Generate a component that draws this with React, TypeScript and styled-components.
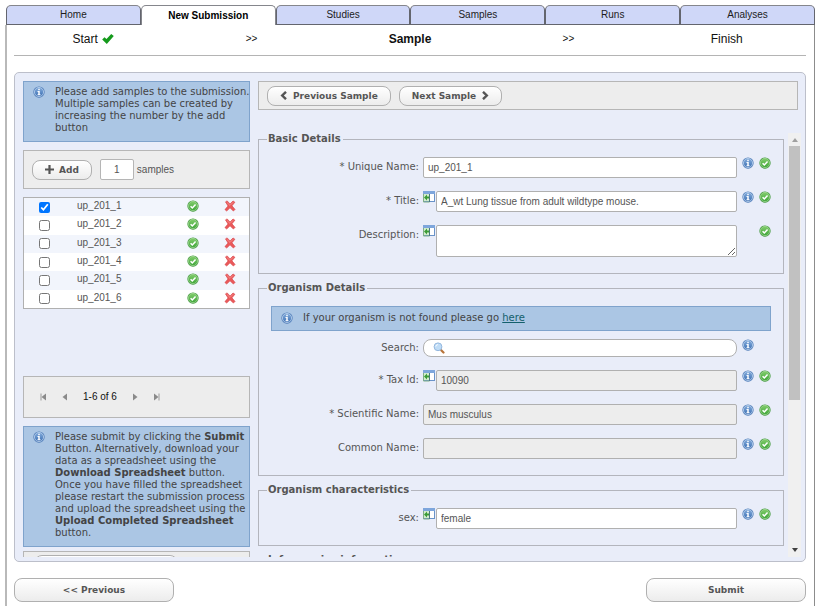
import React, { useId, useState } from "react";
import styled, { createGlobalStyle, css } from "styled-components";

const sans = '"Liberation Sans", Arial, sans-serif';
const wide = '"DejaVu Sans", Verdana, sans-serif';

const GlobalStyle = createGlobalStyle`
  *, *::before, *::after { box-sizing: border-box; }
  body { margin: 0; background: #fff; color: #555; font: 10px/12px ${sans}; }
  button, input, textarea { font: inherit; color: inherit; margin: 0; }
`;

/* ---------- icons ---------- */

const Svg = styled.svg`
  display: block;
  flex: none;
`;

function InfoIcon() {
  const id = useId();
  return (
    <Svg width="12" height="12" viewBox="0 0 16 16" aria-hidden="true">
      <defs>
        <linearGradient id={id} x1="0" y1="0" x2="0" y2="1">
          <stop offset="0" stopColor="#86aedd" />
          <stop offset="1" stopColor="#3b6eb2" />
        </linearGradient>
      </defs>
      <circle cx="8" cy="8" r="7.5" fill="#4d7bb8" />
      <circle cx="8" cy="8" r="6.1" fill={`url(#${id})`} stroke="#c3d8f0" strokeWidth="1" />
      <path d="M7 3.6h2v2H7zM6 6.7h3v4.4h1v1.3H6v-1.3h1V8H6z" fill="#fff" />
    </Svg>
  );
}

function OkIcon() {
  const id = useId();
  return (
    <Svg width="12" height="12" viewBox="0 0 16 16" aria-hidden="true">
      <defs>
        <linearGradient id={id} x1="0" y1="0" x2="0" y2="1">
          <stop offset="0" stopColor="#82cd6c" />
          <stop offset="1" stopColor="#3fa63a" />
        </linearGradient>
      </defs>
      <circle cx="8" cy="8" r="7.5" fill="#3f973b" />
      <circle cx="8" cy="8" r="6.2" fill={`url(#${id})`} stroke="#b2e0a4" strokeWidth="0.9" />
      <path d="M4.8 8.2l2.3 2.4 4.3-4.6" fill="none" stroke="#fff" strokeWidth="2" />
    </Svg>
  );
}

const CrossIcon = () => (
  <Svg width="12" height="12" viewBox="0 0 16 16" aria-hidden="true">
    <path d="M2 2.500 4.200 1.200 8 5.300 12 1.300 14.500 3 10.600 7.800 14.700 12.500 12.500 14.700 8 10.400 3.600 14.600 1.300 12.800 5.400 8z" fill="#ea5a5a" stroke="#d9444a" strokeWidth="0.900" />
    <path d="M3.600 3 8 7.200 12.200 3" fill="none" stroke="#f59a98" strokeWidth="1" />
  </Svg>
);

const SheetIcon = () => (
  <Svg width="13" height="12" viewBox="0 0 13 12" aria-hidden="true">
    <rect x="0.500" y="0.500" width="11" height="10" fill="#fff" stroke="#6a93c8" />
    <rect x="0" y="0" width="12" height="3" fill="#7ea6dc" />
    <rect x="1" y="3" width="5" height="7" fill="#d3ecce" />
    <path d="M0.500 3v8h6" fill="none" stroke="#7fae86" />
    <path d="M6.500 3v8" stroke="#4a7a78" />
    <path d="M1 6.500 4 3.500v2h2v2H4v2z" fill="#3a9c35" />
  </Svg>
);

const SearchIcon = () => (
  <Svg width="12" height="12" viewBox="0 0 12 12" aria-hidden="true">
    <path d="M7.500 7.500 10.500 10.500" stroke="#b8743a" strokeWidth="2.200" strokeLinecap="round" />
    <circle cx="5" cy="4.800" r="3.900" fill="#bfdcf6" stroke="#93b7de" />
    <path d="M2.800 4.500a2.200 2.200 0 0 1 2-1.900" fill="none" stroke="#fff" />
  </Svg>
);

const TickIcon = () => (
  <Svg width="12" height="10" viewBox="0 0 12 10" aria-hidden="true">
    <path d="M0.200 5.400 2.500 3.200 4.500 5 9.200 0.100 11.800 2.100 4.800 9.900z" fill="#159a1c" />
  </Svg>
);

const PlusIcon = () => (
  <Svg width="9" height="9" viewBox="0 0 9 9" aria-hidden="true">
    <path d="M4.500 0v9M0 4.500h9" stroke="#555" strokeWidth="2.200" />
  </Svg>
);

const Chevron = ({ right }: { right?: boolean }) => (
  <Svg width="8" height="9" viewBox="0 0 8 9" aria-hidden="true">
    <path d={right ? "M2 0.800 5.800 4.500 2 8.200" : "M6 0.800 2.200 4.500 6 8.200"} fill="none" stroke="#555" strokeWidth="2.400" />
  </Svg>
);

const PageArrow = ({ right, end }: { right?: boolean; end?: boolean }) => (
  <Svg width="7" height="8" viewBox="0 0 7 8" aria-hidden="true">
    <path d={right ? "M1 0.500 5.500 4 1 7.500z" : "M6 0.500 1.500 4 6 7.500z"} fill="#8a8a8a" />
    {end && <path d={right ? "M6 0.500v7" : "M1 0.500v7"} stroke="#9a9a9a" />}
  </Svg>
);

const ScrollArrow = ({ down }: { down?: boolean }) => (
  <Svg width="6" height="4" viewBox="0 0 6 4" aria-hidden="true">
    <path d={down ? "M0 0h6L3 4z" : "M0 4h6L3 0z"} fill={down ? "#404040" : "#a0a0a0"} />
  </Svg>
);

/* ---------- page frame ---------- */

const Page = styled.div`
  display: flex;
  flex-direction: column;
  height: 100vh;
  min-height: 600px;
  padding: 5px 5px 0;
`;

const Tabs = styled.nav`
  display: flex;
  padding-left: 1px;
`;

const Tab = styled.button<{ $active?: boolean }>`
  flex: 1;
  height: 20px;
  padding: 0;
  border: 1px solid #63656e;
  border-top-color: #85868c;
  border-radius: 5px 5px 0 0;
  background: #cfd7f8;
  color: #1c1c1c;
  ${(p) =>
    p.$active &&
    css`
      border-color: #85868c;
      border-bottom: 0;
      background: #fff;
      color: #000;
      font-weight: bold;
    `}
`;

const Frame = styled.main`
  flex: 1;
  min-height: 0;
  display: flex;
  flex-direction: column;
  padding: 0 8px 4px 7px;
  border-left: 2px solid #b9b9b9;
  border-right: 1px solid #8c8c8c;
`;

const Steps = styled.ol`
  display: grid;
  grid-template-columns: repeat(5, 1fr);
  margin: 0 0 16px;
  padding: 0 0 2px;
  border-bottom: 1px solid #b4b4b4;
  list-style: none;
  color: #111;
`;

const Step = styled.li<{ $kind?: "current" | "separator" }>`
  display: flex;
  align-items: center;
  justify-content: center;
  gap: 4px;
  height: 28px;
  font-size: ${(p) => (p.$kind === "separator" ? "10px" : "12px")};
  font-weight: ${(p) => (p.$kind === "current" ? "bold" : "normal")};
`;

const Panel = styled.section`
  flex: 1;
  min-height: 0;
  display: flex;
  gap: 8px;
  padding: 8px 4px 4px 8px;
  border: 1px solid #bcbfca;
  border-radius: 5px;
  background: #e9edf9;
`;

const Footer = styled.footer`
  display: flex;
  justify-content: space-between;
  margin-top: 16px;
`;

const Button = styled.button<{ $wide?: boolean }>`
  display: inline-flex;
  align-items: center;
  justify-content: center;
  gap: 5px;
  width: ${(p) => (p.$wide ? "160px" : "auto")};
  height: ${(p) => (p.$wide ? "24px" : "20px")};
  padding: 0 12px;
  border: 1px solid #b0b0b0;
  border-radius: 8px;
  background: linear-gradient(#fff, #ececec);
  color: #555;
  font: bold 9px/12px ${wide};
  white-space: nowrap;
`;

/* ---------- left column ---------- */

const Side = styled.aside`
  flex: none;
  width: 227px;
  overflow: hidden;
  display: flex;
  flex-direction: column;
  gap: 8px;
  & > * { flex: none; }
`;

const Notice = styled.div<{ $inline?: boolean }>`
  display: flex;
  gap: 10px;
  padding: ${(p) => (p.$inline ? "5px 9px 6px" : "4px 0 7px 9px")};
  margin-bottom: ${(p) => (p.$inline ? "8px" : "0")};
  border: 1px solid #7fa3cc;
  background: #abc6e4;
  color: #444;
  font: 10px/12px ${wide};
  white-space: nowrap;
  p { margin: 0; }
  a { color: #14606c; }
`;

const Bar = styled.div<{ $size: "tool" | "add" | "pager" }>`
  display: flex;
  align-items: center;
  gap: 8px;
  height: ${(p) => ({ tool: 29, add: 39, pager: 42 })[p.$size]}px;
  margin-right: ${(p) => (p.$size === "tool" ? "3px" : "0")};
  padding: 0 8px;
  border: 1px solid #b6b6b6;
  background: #ededed;
`;

const CountLabel = styled.label`
  display: flex;
  align-items: center;
  gap: 3px;
`;

const CountInput = styled.input`
  width: 34px;
  height: 21px;
  padding: 0;
  border: 1px solid #b5b5b5;
  border-radius: 2px;
  background: #fff;
  text-align: center;
`;

const ListArea = styled.div`
  min-height: 171px;
`;

const SampleTable = styled.table`
  width: 100%;
  height: 112px;
  border: 1px solid #b0b0b0;
  border-spacing: 0;
  background: #fff;
  table-layout: fixed;
  tr:nth-child(odd) { background: #f2f5fc; }
  td { padding: 0 0 2px; }
  td:nth-child(1) { width: 53px; padding: 0 0 0 15px; }
  td:nth-child(3) { width: 37px; }
  td:nth-child(4) { width: 25px; }
`;

const Check = styled.input`
  display: block;
  width: 11px;
  height: 11px;
`;

const IconButton = styled.button`
  display: block;
  padding: 0;
  border: 0;
  background: none;
`;

const Pager = styled.nav`
  display: flex;
  align-items: center;
  gap: 14px;
  padding-left: 8px;
`;

const PageCount = styled.span`
  padding: 0 1px;
  color: #111;
`;

const SheetBar = styled.div`
  height: 40px;
  margin-top: -4px;
  padding: 3px 10px;
  border: 1px solid #b6b6b6;
  background: #ededed;
`;

/* ---------- form ---------- */

const Content = styled.div`
  flex: 1;
  min-width: 0;
  display: flex;
  flex-direction: column;
  gap: 23px;
`;

const Scroller = styled.div`
  flex: 1;
  min-height: 0;
  display: flex;
  gap: 4px;
`;

const Form = styled.form`
  flex: 1;
  min-width: 0;
  overflow: hidden;
`;

const ScrollTrack = styled.div`
  flex: none;
  width: 13px;
  display: flex;
  flex-direction: column;
  align-items: center;
  padding: 5px 0;
  background: #f0f0f0;
`;

const Thumb = styled.div`
  width: 11px;
  height: 254px;
  margin: 4px 0 auto;
  background: #c1c1c1;
`;

const Group = styled.fieldset`
  min-width: 0;
  margin: 0 0 8px;
  padding: 12px 12px 16px;
  border: 1px solid #b3b5bd;
`;

const Legend = styled.legend`
  margin-left: -4px;
  padding: 0 2px 0 1px;
  color: #555;
  font: bold 10px/12px ${wide};
`;

const FieldRow = styled.div`
  display: flex;
  align-items: flex-start;
  & + & { margin-top: 13px; }
`;

const FieldLabel = styled.label<{ $short?: boolean }>`
  flex: none;
  width: 152px;
  padding-right: 4px;
  text-align: right;
  font-family: ${wide};
  line-height: ${(p) => (p.$short ? "18px" : "20px")};
`;

const fieldBox = css`
  flex: 1;
  min-width: 0;
  border: 1px solid #b0b0b0;
  border-radius: 2px;
  background: #fff;
`;

const TextInput = styled.input`
  ${fieldBox}
  height: 21px;
  padding: 0 4px;
  &:read-only { background: #ededed; }
`;

const TextArea = styled.textarea`
  ${fieldBox}
  height: 32px;
  padding: 2px 4px;
`;

const SearchBox = styled.div`
  ${fieldBox}
  display: flex;
  align-items: center;
  height: 18px;
  padding: 0 9px;
  border-radius: 8px;
  input { flex: 1; min-width: 0; border: 0; padding: 0 4px; background: none; outline: 0; }
`;

const FieldIcons = styled.span`
  display: flex;
  flex: none;
  width: 34px;
  gap: 5px;
  padding-left: 5px;
`;

const Spacer = styled.span`
  width: 12px;
`;

type FieldProps = {
  label: string;
  value?: string;
  kind?: "text" | "area" | "search";
  sheet?: boolean;
  readOnly?: boolean;
  info?: boolean;
  ok?: boolean;
};

function Field({ label, value = "", kind = "text", sheet, readOnly, info = true, ok = true }: FieldProps) {
  const id = useId();
  return (
    <FieldRow>
      <FieldLabel htmlFor={id} $short={kind === "search"}>{label}</FieldLabel>
      {sheet && <SheetIcon />}
      {kind === "text" && <TextInput id={id} defaultValue={value} readOnly={readOnly} />}
      {kind === "area" && <TextArea id={id} defaultValue={value} />}
      {kind === "search" && (
        <SearchBox>
          <SearchIcon />
          <input id={id} type="text" />
        </SearchBox>
      )}
      <FieldIcons>
        {info ? <InfoIcon /> : <Spacer />}
        {ok && <OkIcon />}
      </FieldIcons>
    </FieldRow>
  );
}

const tabs = ["Home", "New Submission", "Studies", "Samples", "Runs", "Analyses"];
const samples = [1, 2, 3, 4, 5, 6].map((n) => `up_201_${n}`);

export default function App() {
  const [tab, setTab] = useState("New Submission");
  return (
    <>
      <GlobalStyle />
      <Page>
        <Tabs>
          {tabs.map((t) => (
            <Tab key={t} $active={t === tab} onClick={() => setTab(t)}>{t}</Tab>
          ))}
        </Tabs>
        <Frame>
          <Steps>
            <Step>Start <TickIcon /></Step>
            <Step $kind="separator">&gt;&gt;</Step>
            <Step $kind="current">Sample</Step>
            <Step $kind="separator">&gt;&gt;</Step>
            <Step>Finish</Step>
          </Steps>

          <Panel>
            <Side>
              <Notice>
                <InfoIcon />
                <p>
                  Please add samples to the submission.<br />
                  Multiple samples can be created by<br />
                  increasing the number by the add<br />
                  button
                </p>
              </Notice>
              <Bar $size="add">
                <Button type="button"><PlusIcon /> Add</Button>
                <CountLabel>
                  <CountInput defaultValue="1" />
                  samples
                </CountLabel>
              </Bar>
              <ListArea>
                <SampleTable>
                  <tbody>
                    {samples.map((name, i) => (
                      <tr key={name}>
                        <td><Check type="checkbox" defaultChecked={i === 0} aria-label={name} /></td>
                        <td>{name}</td>
                        <td><OkIcon /></td>
                        <td><IconButton type="button" aria-label={`Delete ${name}`}><CrossIcon /></IconButton></td>
                      </tr>
                    ))}
                  </tbody>
                </SampleTable>
              </ListArea>
              <Bar $size="pager">
                <Pager>
                  <IconButton type="button" aria-label="First page"><PageArrow end /></IconButton>
                  <IconButton type="button" aria-label="Back one page"><PageArrow /></IconButton>
                  <PageCount>1-6 of 6</PageCount>
                  <IconButton type="button" aria-label="Forward one page"><PageArrow right /></IconButton>
                  <IconButton type="button" aria-label="Last page"><PageArrow right end /></IconButton>
                </Pager>
              </Bar>
              <Notice>
                <InfoIcon />
                <p>
                  Please submit by clicking the <b>Submit</b><br />
                  Button. Alternatively, download your<br />
                  data as a spreadsheet using the<br />
                  <b>Download Spreadsheet</b> button.<br />
                  Once you have filled the spreadsheet<br />
                  please restart the submission process<br />
                  and upload the spreadsheet using the<br />
                  <b>Upload Completed Spreadsheet</b><br />
                  button.
                </p>
              </Notice>
              <SheetBar>
                <Button type="button">Download Spreadsheet</Button>
              </SheetBar>
            </Side>

            <Content>
              <Bar $size="tool">
                <Button type="button"><Chevron /> Previous Sample</Button>
                <Button type="button">Next Sample <Chevron right /></Button>
              </Bar>
              <Scroller>
                <Form>
                  <Group>
                    <Legend>Basic Details</Legend>
                    <Field label="* Unique Name:" value="up_201_1" />
                    <Field label="* Title:" sheet value="A_wt Lung tissue from adult wildtype mouse." />
                    <Field label="Description:" sheet kind="area" info={false} />
                  </Group>
                  <Group>
                    <Legend>Organism Details</Legend>
                    <Notice $inline>
                      <InfoIcon />
                      <p>If your organism is not found please go <a href="#taxon">here</a></p>
                    </Notice>
                    <Field label="Search:" kind="search" ok={false} />
                    <Field label="* Tax Id:" sheet readOnly value="10090" />
                    <Field label="* Scientific Name:" readOnly value="Mus musculus" />
                    <Field label="Common Name:" readOnly />
                  </Group>
                  <Group>
                    <Legend>Organism characteristics</Legend>
                    <Field label="sex:" sheet value="female" />
                  </Group>
                  <Group>
                    <Legend>Infraspecies information</Legend>
                  </Group>
                </Form>
                <ScrollTrack>
                  <ScrollArrow />
                  <Thumb />
                  <ScrollArrow down />
                </ScrollTrack>
              </Scroller>
            </Content>
          </Panel>

          <Footer>
            <Button type="button" $wide>&lt;&lt; Previous</Button>
            <Button type="button" $wide>Submit</Button>
          </Footer>
        </Frame>
      </Page>
    </>
  );
}
